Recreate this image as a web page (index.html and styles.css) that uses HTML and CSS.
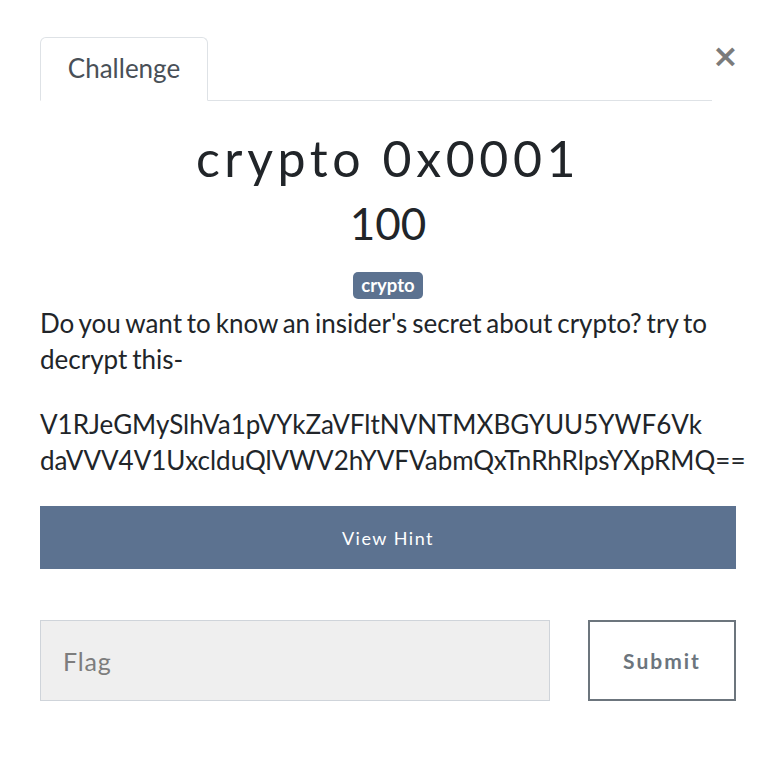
FILE: index.html
```html
<!DOCTYPE html>
<html>
<head>
<meta charset="utf-8">
<link rel="stylesheet" href="styles.css">
</head>
<body>
<div class="modal">
  <div class="header">
    <ul class="tabs">
      <li class="tab active">Challenge</li>
    </ul>
    <button class="close" aria-label="Close">&times;</button>
  </div>
  <div class="content">
    <h2 class="title">crypto 0x0001</h2>
    <h3 class="value">100</h3>
    <div class="tags"><span class="badge">crypto</span></div>
    <div class="desc">
      <p>Do you want to know an insider's secret about crypto? try to decrypt this-</p>
      <p>V1RJeGMySlhVa1pVYkZaVFltNVNTMXBGYUU5YWF6Vk daVVV4V1UxclduQlVWV2hYVFVabmQxTnRhRlpsYXpRMQ==</p>
    </div>
    <button class="hint">View Hint</button>
    <div class="submit-row">
      <input class="flag" type="text" placeholder="Flag">
      <button class="submit">Submit</button>
    </div>
  </div>
</div>
</body>
</html>
```
FILE: styles.css
```css
* { box-sizing: border-box; }
html, body { margin: 0; padding: 0; background: #fff; }
body { font-family: Lato, "Open Sans", sans-serif; color: #212529; }
.modal { width: 770px; padding: 37px 34px 0 40px; }
.header { display: flex; align-items: flex-start; }
.tabs { flex: 1; list-style: none; margin: 0; padding: 0; display: flex; border-bottom: 1px solid #dee2e6; }
.tab { width: 168px; height: 64px; margin-bottom: -1px; padding-bottom: 3px; border: 1px solid #dee2e6; border-bottom-color: #fff; border-radius: 6px 6px 0 0; display: flex; align-items: center; justify-content: center; font-size: 26px; color: #495057; }
.close { width: 24px; height: 40px; margin-top: -1px; padding: 0; border: 0; background: none; font-family: "DejaVu Sans", sans-serif; font-weight: bold; font-size: 32px; line-height: 36px; color: #7b7b7b; cursor: pointer; text-align: right; }
.title { margin: 29px 0 0; text-align: center; font-weight: 400; font-size: 50px; line-height: 56px; letter-spacing: 4.6px; color: #212529; }
.value { margin: 12px 0 0; text-align: center; font-weight: 400; font-size: 44px; line-height: 50px; color: #212529; }
.tags { text-align: center; margin-top: 24px; }
.badge { display: inline-block; background: #5c7290; color: #fff; font-weight: 700; font-size: 18.5px; line-height: 27px; padding: 0 8px; border-radius: 5px; }
.desc { margin-top: 7px; font-size: 26px; line-height: 35.5px; word-spacing: -1.8px; }
.desc p { margin: 0 0 30px; }
.desc p:last-child { margin-bottom: 28px; }
.hint { display: block; width: 696px; height: 63px; margin-top: 0; border: 0; background: #5c7290; color: #fff; font-family: Lato, sans-serif; font-size: 18px; letter-spacing: 1.5px; }
.submit-row { display: flex; justify-content: space-between; margin-top: 51px; }
.flag { width: 510px; height: 81px; background: #efefef; border: 1px solid #cfd4da; padding: 0 22px; font-family: Lato, sans-serif; font-size: 25px; letter-spacing: 0.8px; color: #495057; }
.flag::placeholder { color: #7d7d7d; }
.submit { width: 148px; height: 81px; background: #fff; border: 2px solid #6c757d; color: #6c757d; font-family: Lato, sans-serif; font-weight: 700; font-size: 21px; letter-spacing: 2px; }
```
